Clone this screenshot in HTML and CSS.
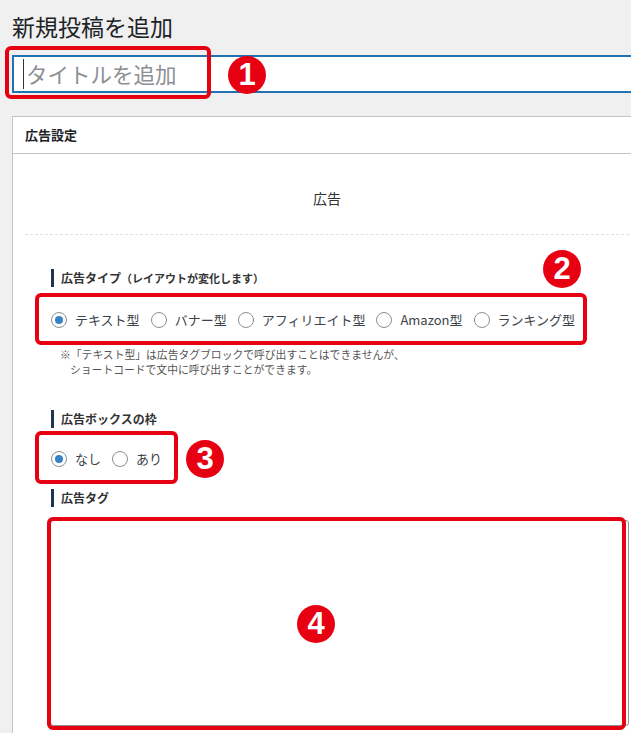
FILE: index.html
```html
<!DOCTYPE html>
<html lang="ja">
<head>
<meta charset="utf-8">
<title>新規投稿を追加</title>
<link rel="stylesheet" href="styles.css">
</head>
<body>
<div class="page">
  <h1 class="heading">新規投稿を追加</h1>
  <div class="title-input"><span class="caret"></span><span class="placeholder">タイトルを追加</span></div>

  <div class="metabox">
    <div class="metabox-head">広告設定</div>
    <div class="metabox-body">
      <div class="ad-title">広告</div>
      <div class="settings">
        <div class="label">広告タイプ<span class="label-sub">（レイアウトが変化します）</span></div>
        <div class="radios">
          <label class="radio"><span class="dot checked"></span>テキスト型</label>
          <label class="radio"><span class="dot"></span>バナー型</label>
          <label class="radio"><span class="dot"></span>アフィリエイト型</label>
          <label class="radio"><span class="dot"></span>Amazon型</label>
          <label class="radio"><span class="dot"></span>ランキング型</label>
        </div>
        <p class="note">※「テキスト型」は広告タグブロックで呼び出すことはできませんが、<br>ショートコードで文中に呼び出すことができます。</p>

        <div class="label label-2">広告ボックスの枠</div>
        <div class="radios radios-2">
          <label class="radio"><span class="dot checked"></span>なし</label>
          <label class="radio"><span class="dot"></span>あり</label>
        </div>

        <div class="label label-3">広告タグ</div>
        <div class="textarea"></div>
      </div>
    </div>
  </div>

  <div class="mark mark-1"></div>
  <div class="badge badge-1">1</div>
  <div class="mark mark-2"></div>
  <div class="badge badge-2">2</div>
  <div class="mark mark-3"></div>
  <div class="badge badge-3">3</div>
  <div class="mark mark-4"></div>
  <div class="badge badge-4">4</div>
</div>
</body>
</html>
```

FILE: styles.css
```css
html, body {
  margin: 0;
  padding: 0;
}
body {
  background: #f0f0f1;
  font-family: "Noto Sans CJK JP", "Noto Sans", sans-serif;
  color: #1d2327;
  overflow: hidden;
}
.page {
  position: relative;
  width: 631px;
  height: 733px;
  overflow: hidden;
  padding-left: 12px;
  box-sizing: border-box;
}
.heading {
  margin: 0;
  padding-top: 11px;
  font-size: 23px;
  line-height: 30px;
  font-weight: 400;
  color: #1d2327;
}
.title-input {
  margin-top: 14px;
  height: 38px;
  width: 660px;
  box-sizing: border-box;
  border: 2px solid #2271b1;
  background: #fff;
  display: flex;
  align-items: center;
  padding-left: 9px;
}
.caret {
  flex: none;
  width: 1px;
  height: 30px;
  background: #333;
  margin-right: 2px;
}
.placeholder {
  font-size: 21.5px;
  color: #8c8f94;
  line-height: 30px;
  white-space: nowrap;
}
.metabox {
  flex: none;
  margin-top: 23px;
  width: 630px;
  background: #fff;
  border: 1px solid #c3c4c7;
  box-sizing: border-box;
}
.metabox-head {
  height: 36px;
  line-height: 36px;
  border-bottom: 1px solid #c3c4c7;
  padding-left: 12px;
  font-size: 13px;
  font-weight: 700;
  color: #1d2327;
}
.ad-title {
  text-align: center;
  font-size: 14px;
  line-height: 20px;
  color: #333;
  padding: 34px 0 26px;
  margin: 0 12px;
  border-bottom: 1px dashed #e2e2e2;
}
.settings {
  padding-left: 38px;
  padding-top: 34px;
  height: 520px;
}
.label {
  border-left: 3px solid #1f3550;
  padding-left: 7px;
  height: 18px;
  line-height: 18px;
  font-size: 12px;
  font-weight: 700;
  color: #333;
}
.label-sub {
  font-size: 11px;
}
.radios {
  margin-top: 23px;
  display: flex;
  align-items: center;
  gap: 11px;
  height: 20px;
}
.radio {
  display: flex;
  align-items: center;
  gap: 8px;
  font-size: 13px;
  line-height: 20px;
  color: #3c434a;
  white-space: nowrap;
}
.dot {
  flex: none;
  width: 16px;
  height: 16px;
  box-sizing: border-box;
  border: 1px solid #8c8f94;
  border-radius: 50%;
  background: #fff;
  display: flex;
  align-items: center;
  justify-content: center;
}
.dot.checked::after {
  content: "";
  width: 8px;
  height: 8px;
  border-radius: 50%;
  background: #3582c4;
}
.note {
  margin: 17px 0 0;
  padding-left: 19px;
  text-indent: -10px;
  font-size: 10.8px;
  line-height: 15px;
  color: #555;
  white-space: nowrap;
}
.label-2 {
  margin-top: 33px;
}
.radios-2 {
  margin-top: 21px;
}
.label-3 {
  margin-top: 20px;
}
.textarea {
  margin-top: 13px;
  margin-left: -1px;
  width: 579px;
  height: 206px;
  box-sizing: border-box;
  border: 1px solid #8c8f94;
  border-radius: 3px;
  background: #fff;
}
.mark {
  position: absolute;
  border: 4px solid #e60012;
  border-radius: 6px;
  box-sizing: border-box;
}
.mark-1 { left: 5px; top: 46px; width: 206px; height: 53px; }
.mark-2 { left: 35px; top: 293px; width: 552px; height: 52px; }
.mark-3 { left: 35px; top: 431px; width: 143px; height: 53px; }
.mark-4 { left: 47px; top: 517px; width: 579px; height: 213px; }
.badge {
  position: absolute;
  width: 38px;
  height: 38px;
  border-radius: 50%;
  background: #e60012;
  color: #fff;
  font-family: "Liberation Sans", Arial, sans-serif;
  font-weight: 700;
  font-size: 31px;
  line-height: 38px;
  text-align: center;
}
.badge-1 { left: 228px; top: 56px; }
.badge-2 { left: 543px; top: 250px; }
.badge-3 { left: 186px; top: 440px; }
.badge-4 { left: 297px; top: 605px; }
```
